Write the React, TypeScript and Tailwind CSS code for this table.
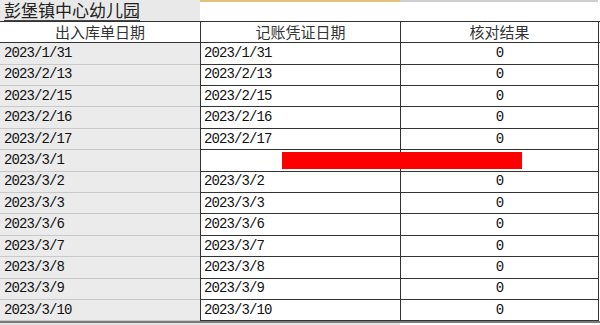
import React from "react";

const rows: [string, string | null][] = [
  ["2023/1/31", "2023/1/31"],
  ["2023/2/13", "2023/2/13"],
  ["2023/2/15", "2023/2/15"],
  ["2023/2/16", "2023/2/16"],
  ["2023/2/17", "2023/2/17"],
  ["2023/3/1", null],
  ["2023/3/2", "2023/3/2"],
  ["2023/3/3", "2023/3/3"],
  ["2023/3/6", "2023/3/6"],
  ["2023/3/7", "2023/3/7"],
  ["2023/3/8", "2023/3/8"],
  ["2023/3/9", "2023/3/9"],
  ["2023/3/10", "2023/3/10"],
];

const mono = "font-['Liberation_Mono',monospace] text-[14px] tracking-[-0.9px] text-[#111]";
const cjk = "font-['Noto_Sans_CJK_SC',sans-serif]";

export default function App() {
  return (
    <div className="relative w-[600px] h-[325px] overflow-hidden bg-white">
      {/* title row */}
      <div className="flex h-[22px] border-b border-[#333]">
        <div className="w-[200px] bg-[#e9e9e9] pl-[4px] flex items-start">
          <span className={`${cjk} text-[17px] leading-[20px] text-[#222] border-b border-[#444]`}>
            彭堡镇中心幼儿园
          </span>
        </div>
        <div className="w-[200px] border-t-2 border-[#e2c07a]" />
        <div className="w-[198px] border-t-2 border-[#d0d0d0]" />
      </div>
      {/* header row */}
      <div className={`flex h-[21.3px] border-b border-[#333] ${cjk} text-[15px] leading-[20px] text-[#333]`}>
        <div className="w-[200px] flex items-center justify-center bg-white">出入库单日期</div>
        <div className="w-[200px] flex items-center justify-center border-l border-[#333]">记账凭证日期</div>
        <div className="w-[199px] flex items-center justify-center border-l border-r border-[#333]">核对结果</div>
      </div>
      {rows.map(([a, b], i) => (
        <div key={i} className="flex h-[21.4px]">
          <div className={`w-[200px] bg-[#ebebeb] border-b border-[#c9c9c9] pl-[4px] flex items-center ${mono}`}>
            {a}
          </div>
          <div className={`w-[200px] border-l border-b border-[#333] pl-[3px] flex items-center ${mono}`}>
            {b ?? ""}
          </div>
          <div className={`w-[199px] border-l border-r border-b border-[#333] flex items-center justify-center ${mono}`}>
            {b ? "0" : ""}
          </div>
        </div>
      ))}
      {/* bottom edge */}
      <div className="h-[2px] bg-[#7a7a7a]" />
      <div className="flex h-[3px]">
        <div className="w-[400px] bg-[#e3e3e3]" />
        <div className="flex-1 bg-white" />
      </div>
      {/* red bar */}
      <div className="absolute left-[282px] top-[152px] w-[240px] h-[17px] bg-[#ff0000]" />
    </div>
  );
}
